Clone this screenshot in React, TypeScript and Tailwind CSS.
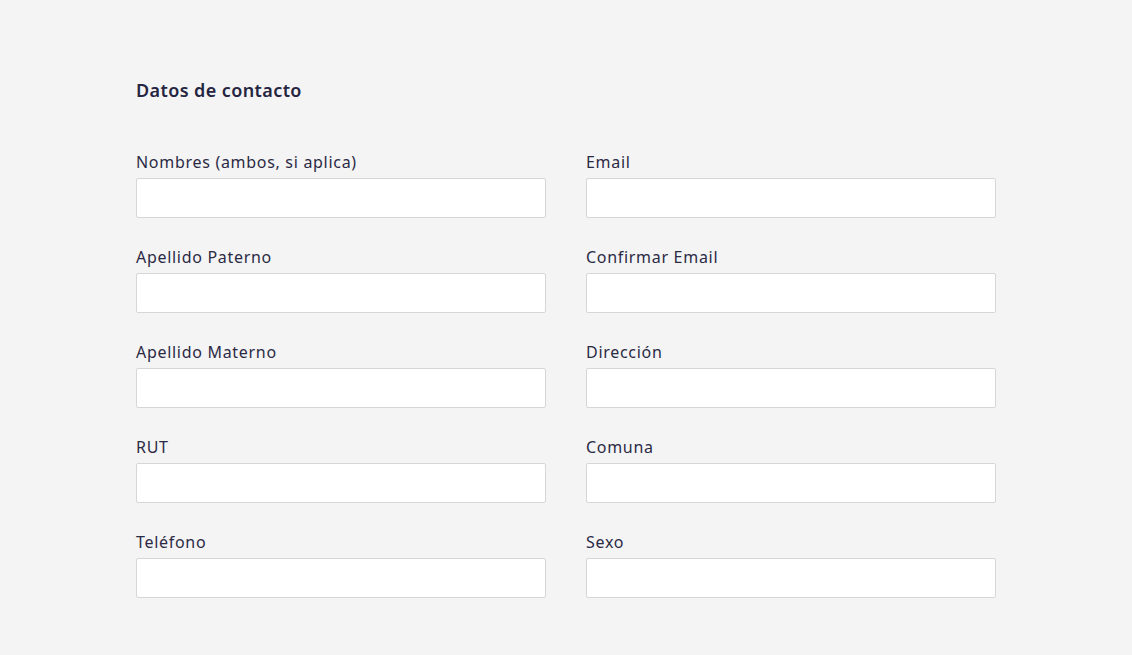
const fields: [string, string][] = [
  ["Nombres (ambos, si aplica)", "Email"],
  ["Apellido Paterno", "Confirmar Email"],
  ["Apellido Materno", "Dirección"],
  ["RUT", "Comuna"],
  ["Teléfono", "Sexo"],
];

function Field({ label }: { label: string }) {
  return (
    <label className="flex flex-col">
      <span className="text-[16px] leading-[19px] tracking-[0.7px] text-[#2b2a45] mb-[6px]">{label}</span>
      <input
        type="text"
        className="h-[40px] w-full bg-white border border-[#d6d6d6] rounded-[2px] px-3 outline-none"
      />
    </label>
  );
}

export default function App() {
  return (
    <div
      className="min-h-screen w-full bg-[#f4f4f4] pt-[78px]"
      style={{ fontFamily: '"Noto Sans", "Open Sans", sans-serif' }}
    >
      <div className="ml-[136px] w-[860px]">
        <h2 className="text-[18px] leading-[24px] font-semibold tracking-[0.4px] text-[#262541] mb-[51px]">
          Datos de contacto
        </h2>
        <div className="grid grid-cols-2 gap-x-[40px] gap-y-[30px]">
          {fields.flatMap(([a, b]) => [<Field key={a} label={a} />, <Field key={b} label={b} />])}
        </div>
      </div>
    </div>
  );
}
